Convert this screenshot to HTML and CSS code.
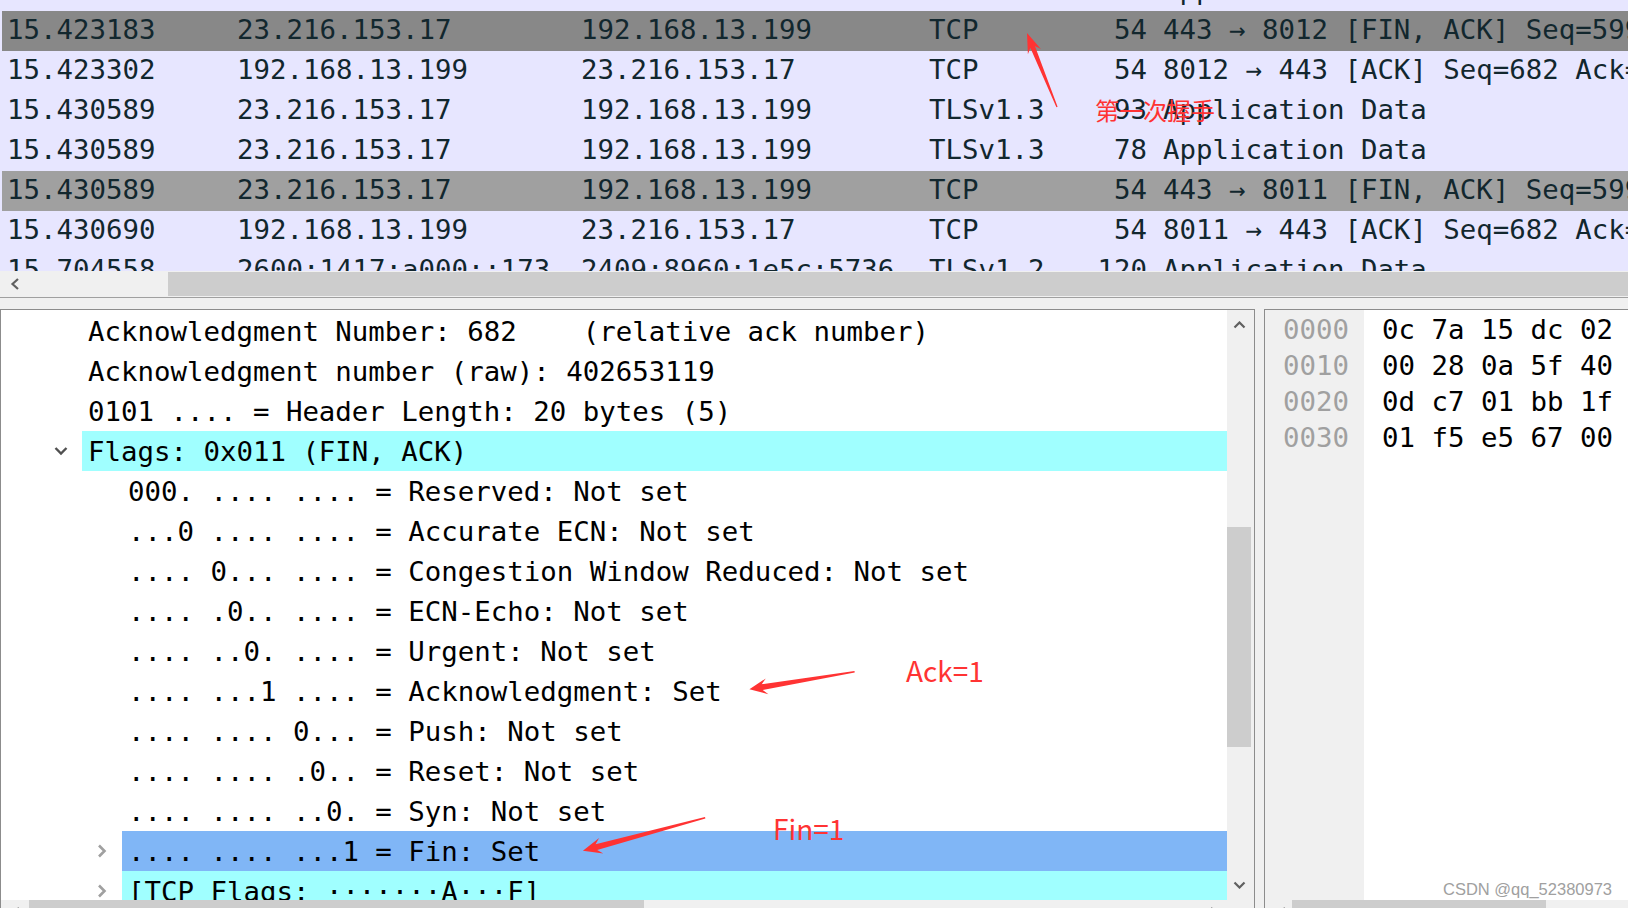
FILE: index.html
```html
<!DOCTYPE html>
<html>
<head>
<meta charset="utf-8">
<title>Wireshark</title>
<link rel="stylesheet" href="styles.css">
</head>
<body>
<section class="packet-list">
  <div class="plist-rows">
    <div class="prow partial"><span class="c-time">15.419863</span><span class="c-src">192.168.13.199</span><span class="c-dst">23.216.153.17</span><span class="c-proto">TLSv1.3</span><span class="c-len">85</span><span class="c-info">Application Data</span></div>
    <div class="prow sel"><span class="c-time">15.423183</span><span class="c-src">23.216.153.17</span><span class="c-dst">192.168.13.199</span><span class="c-proto">TCP</span><span class="c-len">54</span><span class="c-info">443 → 8012 [FIN, ACK] Seq=599 Ack=682 Win=1025 Len=0</span></div>
    <div class="prow"><span class="c-time">15.423302</span><span class="c-src">192.168.13.199</span><span class="c-dst">23.216.153.17</span><span class="c-proto">TCP</span><span class="c-len">54</span><span class="c-info">8012 → 443 [ACK] Seq=682 Ack=600 Win=1024 Len=0</span></div>
    <div class="prow"><span class="c-time">15.430589</span><span class="c-src">23.216.153.17</span><span class="c-dst">192.168.13.199</span><span class="c-proto">TLSv1.3</span><span class="c-len">93</span><span class="c-info">Application Data</span></div>
    <div class="prow"><span class="c-time">15.430589</span><span class="c-src">23.216.153.17</span><span class="c-dst">192.168.13.199</span><span class="c-proto">TLSv1.3</span><span class="c-len">78</span><span class="c-info">Application Data</span></div>
    <div class="prow fin"><span class="c-time">15.430589</span><span class="c-src">23.216.153.17</span><span class="c-dst">192.168.13.199</span><span class="c-proto">TCP</span><span class="c-len">54</span><span class="c-info">443 → 8011 [FIN, ACK] Seq=599 Ack=682 Win=1025 Len=0</span></div>
    <div class="prow"><span class="c-time">15.430690</span><span class="c-src">192.168.13.199</span><span class="c-dst">23.216.153.17</span><span class="c-proto">TCP</span><span class="c-len">54</span><span class="c-info">8011 → 443 [ACK] Seq=682 Ack=600 Win=1024 Len=0</span></div>
    <div class="prow"><span class="c-time">15.704558</span><span class="c-src">2600:1417:a000::173</span><span class="c-dst">2409:8960:1e5c:5736</span><span class="c-proto">TLSv1.2</span><span class="c-len">120</span><span class="c-info">Application Data</span></div>
  </div>
  <div class="hscroll">
    <div class="hs-btn"><svg width="10" height="12" viewBox="0 0 10 12"><polyline points="8,1 2.5,6 8,11" fill="none" stroke="#606060" stroke-width="2.2"/></svg></div>
    <div class="top-thumb"></div>
  </div>
</section>

<div class="panes">
  <section class="detail">
    <div class="detail-main">
      <div class="tree">
        <div class="trow l1"><span class="ind"></span><span class="tcell">Acknowledgment Number: 682    (relative ack number)</span></div>
        <div class="trow l1"><span class="ind"></span><span class="tcell">Acknowledgment number (raw): 402653119</span></div>
        <div class="trow l1"><span class="ind"></span><span class="tcell">0101 .... = Header Length: 20 bytes (5)</span></div>
        <div class="trow l1"><span class="ind"><svg width="14" height="10" viewBox="0 0 14 10"><polyline points="1.5,2 7,7.5 12.5,2" fill="none" stroke="#505050" stroke-width="2.4"/></svg></span><span class="tcell hl-cyan">Flags: 0x011 (FIN, ACK)</span></div>
        <div class="trow l2"><span class="ind"></span><span class="tcell">000. .... .... = Reserved: Not set</span></div>
        <div class="trow l2"><span class="ind"></span><span class="tcell">...0 .... .... = Accurate ECN: Not set</span></div>
        <div class="trow l2"><span class="ind"></span><span class="tcell">.... 0... .... = Congestion Window Reduced: Not set</span></div>
        <div class="trow l2"><span class="ind"></span><span class="tcell">.... .0.. .... = ECN-Echo: Not set</span></div>
        <div class="trow l2"><span class="ind"></span><span class="tcell">.... ..0. .... = Urgent: Not set</span></div>
        <div class="trow l2"><span class="ind"></span><span class="tcell">.... ...1 .... = Acknowledgment: Set</span></div>
        <div class="trow l2"><span class="ind"></span><span class="tcell">.... .... 0... = Push: Not set</span></div>
        <div class="trow l2"><span class="ind"></span><span class="tcell">.... .... .0.. = Reset: Not set</span></div>
        <div class="trow l2"><span class="ind"></span><span class="tcell">.... .... ..0. = Syn: Not set</span></div>
        <div class="trow l2"><span class="ind"><svg width="10" height="14" viewBox="0 0 10 14"><polyline points="2,1.5 7.5,7 2,12.5" fill="none" stroke="#a0a0a0" stroke-width="2.6"/></svg></span><span class="tcell hl-blue">.... .... ...1 = Fin: Set</span></div>
        <div class="trow l2"><span class="ind"><svg width="10" height="14" viewBox="0 0 10 14"><polyline points="2,1.5 7.5,7 2,12.5" fill="none" stroke="#a0a0a0" stroke-width="2.6"/></svg></span><span class="tcell hl-cyan">[TCP Flags: ·······A···F]</span></div>
      </div>
      <div class="vscroll">
        <div class="vs-btn"><svg width="13" height="8" viewBox="0 0 13 8"><polyline points="1.5,6.5 6.5,1.5 11.5,6.5" fill="none" stroke="#606060" stroke-width="2.2"/></svg></div>
        <div class="vs-track"><div class="vs-thumb"></div></div>
        <div class="vs-btn"><svg width="13" height="8" viewBox="0 0 13 8"><polyline points="1.5,1.5 6.5,6.5 11.5,1.5" fill="none" stroke="#606060" stroke-width="2.2"/></svg></div>
      </div>
    </div>
    <div class="hscroll">
      <div class="hs-btn"><svg width="10" height="12" viewBox="0 0 10 12"><polyline points="8,1 2.5,6 8,11" fill="none" stroke="#606060" stroke-width="2.2"/></svg></div>
      <div class="det-thumb"></div>
      <div class="hs-fill"></div>
      <div class="hs-btn"><svg width="10" height="12" viewBox="0 0 10 12"><polyline points="2,1 7.5,6 2,11" fill="none" stroke="#606060" stroke-width="2.2"/></svg></div>
      <div class="hs-corner"></div>
    </div>
  </section>

  <section class="hex">
    <div class="hex-main">
      <div class="offsets">0000<br>0010<br>0020<br>0030</div>
      <div class="bytes">0c 7a 15 dc 02<br>00 28 0a 5f 40<br>0d c7 01 bb 1f<br>01 f5 e5 67 00</div>
    </div>
    <div class="hscroll">
      <div class="hs-btn hex-btn"><svg width="10" height="12" viewBox="0 0 10 12"><polyline points="8,1 2.5,6 8,11" fill="none" stroke="#606060" stroke-width="2.2"/></svg></div>
      <div class="hex-thumb"></div>
    </div>
  </section>
</div>

<svg class="arrows" width="1628" height="908" viewBox="0 0 1628 908">
  <polygon points="1027,33 1040.9,49 1034.9,46 1057.6,106.8 1056.4,107.2 1030.3,47.8 1027.9,54.2" fill="#ff3333"/>
  <polygon points="749.4,689.3 768.4,694.2 762.7,690.1 854.7,672.5 854.5,670.9 761.7,684.2 765.8,678.4" fill="#ff3333"/>
  <polygon points="582.9,850.7 603.3,853.5 597.2,849.9 705.4,818.5 705,816.9 595.6,844.2 599.1,838" fill="#ff3333"/>
</svg>
<span class="lbl lbl-cn">第一次握手</span>
<span class="lbl lbl-ack">Ack=1</span>
<span class="lbl lbl-fin">Fin=1</span>
<span class="watermark">CSDN @qq_52380973</span>
</body>
</html>
```
FILE: styles.css
```css
* { box-sizing: border-box; }
html, body { margin: 0; padding: 0; }
body {
  width: 1628px;
  height: 908px;
  overflow: hidden;
  position: relative;
  background: #f0f0f0;
  font-family: "DejaVu Sans Mono", "Liberation Mono", monospace;
  font-size: 27.4px;
  color: #000;
}

/* ---------- packet list ---------- */
.packet-list {
  height: 298px;
  border-bottom: 1px solid #a0a0a0;
  display: flex;
  flex-direction: column;
}
.plist-rows {
  height: 271px;
  flex: none;
  overflow: hidden;
  background: #e7e6ff;
  color: #12272e;
}
.prow {
  display: grid;
  grid-template-columns: 230px 344px 348px 120px 98px minmax(0, 1fr);
  padding-left: 7px;
  height: 40px;
  line-height: 38px;
  white-space: pre;
}
.prow span { overflow: hidden; }
.prow.partial { margin-top: -29px; }
.prow.sel { background: linear-gradient(to right, #e7e6ff 2px, #888888 2px); }
.prow.fin { background: linear-gradient(to right, #e7e6ff 2px, #a0a0a0 2px); }
.c-len { text-align: right; }
.c-info { padding-left: 16px; }

/* ---------- scrollbars ---------- */
.hscroll {
  height: 25px;
  flex: none;
  display: flex;
  background: #f0f0f0;
}
.hs-btn {
  width: 28px;
  flex: none;
  display: flex;
  padding: 7px 0 0 10px;
}
.hs-btn.hex-btn { width: 27px; padding-left: 12px; }
.top-thumb {
  flex: 1;
  margin: 1px 0 0 140px;
  background: #cdcdcd;
}
.det-thumb {
  width: 615px;
  flex: none;
  background: #cdcdcd;
}
.hs-fill { flex: 1; }
.hs-corner { width: 27px; flex: none; }
.hex-thumb {
  width: 254px;
  flex: none;
  background: #cdcdcd;
}

/* ---------- lower panes ---------- */
.panes {
  display: flex;
  margin-top: 11px;
  height: 599px;
}
.detail {
  width: 1255px;
  flex: none;
  border: 1px solid #8c8c8c;
  border-bottom: none;
  display: flex;
  flex-direction: column;
  background: #fff;
}
.detail-main {
  height: 590px;
  flex: none;
  display: flex;
}
.tree {
  width: 1226px;
  flex: none;
  padding-top: 1px;
  overflow: hidden;
  background: #fff;
}
.trow {
  display: flex;
  height: 40px;
  line-height: 42px;
  white-space: pre;
}
.ind {
  flex: none;
  display: flex;
  align-items: center;
  justify-content: flex-end;
}
.l1 .ind { width: 81px; padding-right: 14px; }
.l2 .ind { width: 121px; padding-right: 15px; }
.tcell {
  flex: 1;
  min-width: 0;
  padding-left: 6px;
  overflow: hidden;
}
.hl-cyan { background: #a0ffff; }
.hl-blue { background: #80b6f6; }

.vscroll {
  width: 27px;
  flex: none;
  background: #f0f0f0;
  display: flex;
  flex-direction: column;
}
.vs-btn {
  height: 30px;
  flex: none;
  display: flex;
  align-items: center;
  padding-left: 6px;
}
.vs-track { flex: 1; }
.vs-thumb {
  margin-top: 187px;
  width: 24px;
  height: 220px;
  background: #cdcdcd;
}

.hex {
  flex: 1;
  margin-left: 9px;
  border-left: 1px solid #8c8c8c;
  border-top: 1px solid #8c8c8c;
  display: flex;
  flex-direction: column;
  background: #fff;
}
.hex-main {
  height: 590px;
  flex: none;
  display: flex;
}
.offsets {
  width: 99px;
  flex: none;
  background: #f0f0f0;
  color: #a0a0a0;
  padding: 2px 0 0 18px;
  line-height: 36px;
}
.bytes {
  flex: 1;
  padding: 2px 0 0 18px;
  line-height: 36px;
  white-space: pre;
}

/* ---------- annotations ---------- */
.arrows {
  position: absolute;
  left: 0;
  top: 0;
  pointer-events: none;
}
.lbl {
  position: absolute;
  color: #ff3333;
  font-family: "Noto Sans CJK SC", "Noto Sans", sans-serif;
  white-space: nowrap;
}
.lbl-cn { left: 1095px; top: 98px; font-size: 24px; line-height: 24px; }
.lbl-ack { left: 906px; top: 656px; font-size: 28px; line-height: 28px; }
.lbl-fin { left: 773px; top: 814px; font-size: 28px; line-height: 28px; }

.watermark {
  position: absolute;
  left: 1443px;
  top: 879px;
  font-family: "Liberation Sans", Arial, sans-serif;
  font-size: 16.5px;
  line-height: 20px;
  color: #a0a0a0;
  text-shadow: 0 0 1px #fff;
  white-space: nowrap;
}
```
